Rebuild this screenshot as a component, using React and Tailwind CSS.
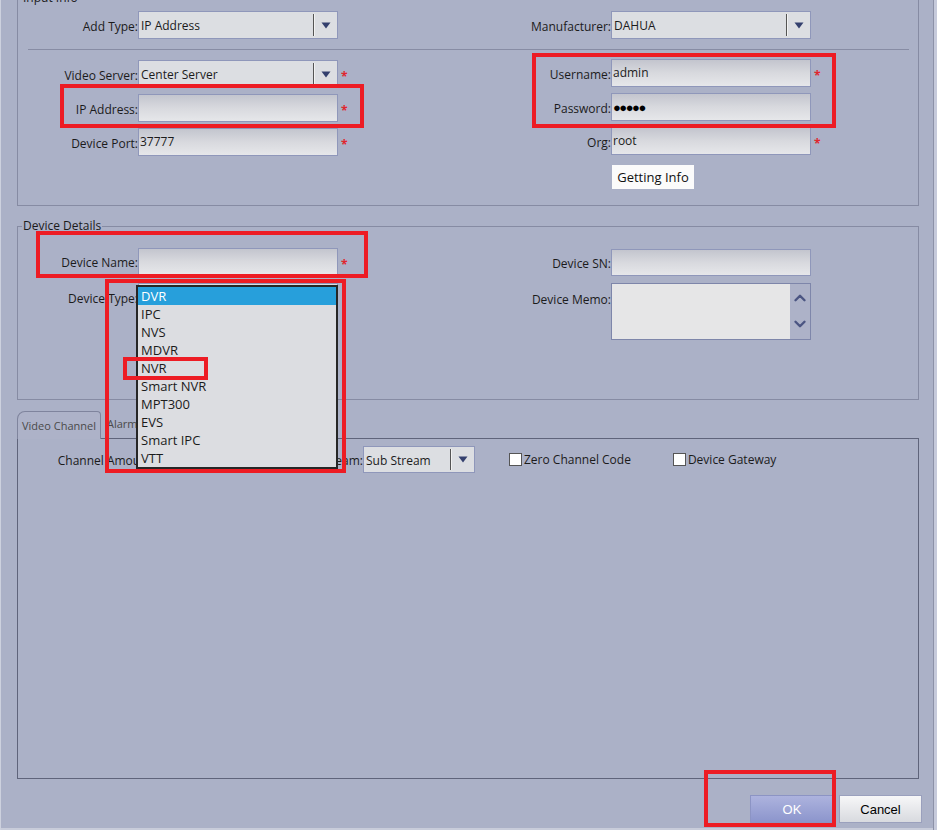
import React from 'react';
import { ChevronUp, ChevronDown } from 'lucide-react';

const font = { fontFamily: '"Open Sans", "Noto Sans", sans-serif' };
const narrow = { fontFamily: '"Liberation Sans Narrow", "Liberation Sans", sans-serif' };

const Tri = () => (
  <svg width="10" height="7" viewBox="0 0 10 7">
    <polygon points="0.5,0.5 9.5,0.5 5,6.5" fill="#34406e" />
  </svg>
);

const Req = () => <span className="pl-[3px] pt-[6px] text-[#e0262e] text-[12px] leading-none font-bold">*</span>;

const Input = ({ children, w = 'w-[200px]', h = 'h-[28px]' }) => (
  <div className={`${w} ${h} shrink-0 border border-[#8f97ba] bg-linear-to-b from-[#c3c5ce] via-[#d8d9de] to-[#e6e7ea] flex items-center pl-[1px] whitespace-nowrap`}>
    {children}
  </div>
);

const Select = ({ value, w = 'w-[200px]', h = 'h-[28px]' }) => (
  <div className={`${w} ${h} shrink-0 border border-[#8f97ba] bg-[#dcdee2] flex items-center`}>
    <span className="flex-1 pl-[2px] pt-[2px] whitespace-nowrap">{value}</span>
    <div className="w-[1px] self-stretch my-[2px] bg-[#555]" />
    <div className="w-[1px] self-stretch my-[2px] bg-[#f2f2f2]" />
    <div className="w-[22px] flex justify-center"><Tri /></div>
  </div>
);

const Label = ({ children, w = 'w-[120px]' }) => (
  <span className={`${w} shrink-0 pt-[3px] text-right whitespace-nowrap`}>{children}</span>
);

const Check = ({ label }) => (
  <div className="flex items-center gap-[2px]">
    <div className="w-[13px] h-[13px] bg-white border border-[#555]" />
    <span className="pt-[1px]">{label}</span>
  </div>
);

const Red = ({ cls }) => <div className={`absolute border-[4px] border-[#ed1c24] ${cls}`} />;

const items = ['DVR', 'IPC', 'NVS', 'MDVR', 'NVR', 'Smart NVR', 'MPT300', 'EVS', 'Smart IPC', 'VTT'];

export default function App() {
  return (
    <div className="relative w-[937px] h-[830px] overflow-hidden bg-[#abb1c7] flex text-[12px] text-[#1b1b1b]" style={font}>
      <div className="w-[1px] shrink-0 bg-[#cdd1de]" />

      <div className="flex-1 flex flex-col border-b-[2px] border-[#c8ccda]">
        {/* Input Info */}
        <div className="relative ml-[16px] w-[902px] -mt-[4px] border border-[#868ba3] pt-[14px] pb-[16px]">
          <span className="absolute -top-[7px] left-[4px] px-[1px] leading-[16px] bg-[#abb1c7]">Input Info</span>
          <div className="flex">
            <div className="w-[452px] flex items-center">
              <Label>Add Type:</Label>
              <Select value="IP Address" />
            </div>
            <div className="flex items-center">
              <Label w="w-[141px]">Manufacturer:</Label>
              <Select value="DAHUA" />
            </div>
          </div>
          <div className="h-[1px] bg-[#878ca4] ml-[10px] mr-[9px] mt-[10px]" />
          <div className="flex mt-[9px]">
            <div className="w-[452px] flex flex-col gap-[6px] pt-[1px]">
              <div className="flex items-center">
                <Label>Video Server:</Label>
                <Select value="Center Server" />
                <Req />
              </div>
              <div className="flex items-center">
                <Label>IP Address:</Label>
                <Input />
                <Req />
              </div>
              <div className="flex items-center">
                <Label>Device Port:</Label>
                <Input><span className="self-start pt-[4px]">37777</span></Input>
                <Req />
              </div>
            </div>
            <div className="flex flex-col gap-[6px]">
              <div className="flex items-center">
                <Label w="w-[141px]">Username:</Label>
                <Input><span className="self-start pt-[4px]">admin</span></Input>
                <Req />
              </div>
              <div className="flex items-center">
                <Label w="w-[141px]">Password:</Label>
                <Input><span className="text-[13px] tracking-[-1.5px] text-black pt-[1px]">●●●●●</span></Input>
              </div>
              <div className="flex items-center">
                <Label w="w-[141px]">Org:</Label>
                <Input><span className="self-start pt-[4px]">root</span></Input>
                <Req />
              </div>
              <div className="flex mt-[4px]">
                <div className="ml-[142px] w-[82px] h-[24px] bg-[#fbfbfb] flex items-center justify-center pt-[1px] text-[13px] text-[#111]">
                  Getting Info
                </div>
              </div>
            </div>
          </div>
        </div>

        {/* Device Details */}
        <div className="relative ml-[16px] w-[902px] mt-[20px] h-[174px] border border-[#868ba3] pt-[21px]">
          <span className="absolute -top-[9px] left-[4px] px-[1px] leading-[16px] bg-[#abb1c7]">Device Details</span>
          <div className="flex">
            <div className="w-[452px] flex flex-col gap-[8px]">
              <div className="flex items-center">
                <Label>Device Name:</Label>
                <Input h="h-[27px]" />
                <Req />
              </div>
              <div className="flex items-center">
                <Label>Device Type:</Label>
                <Select value="" />
              </div>
            </div>
            <div className="flex flex-col gap-[7px] pt-[1px]">
              <div className="flex items-center">
                <Label w="w-[141px]">Device SN:</Label>
                <Input h="h-[27px]" />
              </div>
              <div className="flex items-start">
                <Label w="w-[141px]"><span className="block pt-[5px]">Device Memo:</span></Label>
                <div className="w-[200px] h-[57px] border border-[#7e86aa] bg-[#e6e6e7] flex justify-end">
                  <div className="w-[20px] bg-[#adb2c8] flex flex-col items-center pt-[5px] gap-[8px]">
                    <ChevronUp size={18} strokeWidth={3.2} className="text-[#4b5582]" />
                    <ChevronDown size={18} strokeWidth={3.2} className="text-[#4b5582]" />
                  </div>
                </div>
              </div>
            </div>
          </div>
        </div>

        {/* Tabs */}
        <div className="ml-[16px] w-[902px] mt-[11px] flex items-end">
          <div className="relative z-10 w-[84px] h-[28px] -mb-[1px] border border-b-0 border-[#7f849d] rounded-tl-[8px] rounded-tr-[4px] bg-[#adb2c8] flex items-center justify-center pt-[1px] text-[11px] text-[#4a4a4a] whitespace-nowrap">
            Video Channel
          </div>
          <div className="h-[27px] flex items-center pl-[6px] w-[118px] text-[11px] text-[#4a4a4a] whitespace-nowrap">Alarm Input Channel</div>
          <div className="h-[27px] flex items-center pl-[4px] text-[11px] text-[#4a4a4a] whitespace-nowrap">Alarm Output Channe</div>
        </div>
        <div className="ml-[16px] w-[902px] h-[341px] border border-[#5f647b] pt-[7px]">
          <div className="flex items-center">
            <Label w="w-[137px]">Channel Amount:</Label>
            <Input w="w-[111px]" h="h-[27px]" />
            <Label w="w-[97px]">Stream:</Label>
            <Select value="Sub Stream" w="w-[112px]" h="h-[27px]" />
            <div className="ml-[34px]"><Check label="Zero Channel Code" /></div>
            <div className="ml-[42px]"><Check label="Device Gateway" /></div>
          </div>
        </div>

        {/* Buttons */}
        <div className="flex justify-end gap-[5px] mt-[16px] mr-[11px]">
          <div className="w-[84px] h-[28px] border border-[#8c94c4] bg-linear-to-b from-[#adb3de] to-[#8c95cc] flex items-center justify-center pt-[2px] text-[13px] text-white" style={narrow}>
            OK
          </div>
          <div className="w-[83px] h-[28px] border border-[#9aa0bd] bg-linear-to-b from-[#f7f7f8] to-[#d8dadf] flex items-center justify-center pt-[2px] text-[13px] text-black" style={narrow}>
            Cancel
          </div>
        </div>
      </div>

      <div className="w-[4px] shrink-0 border-l border-[#8d92a8] bg-[#c6cadb]" />

      {/* dropdown list of Device Type */}
      <div className="absolute left-[136px] top-[285px] w-[202px] border-2 border-[#262626] bg-[#dcdde1] flex flex-col">
        {items.map((it, i) => (
          <div key={it} className={i === 0 ? 'h-[18px] pl-[3px] pt-[1px] flex items-center bg-[#279fdb] text-white text-[13px]' : 'h-[18px] pl-[3px] pt-[1px] flex items-center text-[#1b1b1b] text-[13px]'}>
            {it}
          </div>
        ))}
      </div>

      {/* annotation boxes */}
      <Red cls="left-[60px] top-[84px] w-[304px] h-[44px]" />
      <Red cls="left-[532px] top-[53px] w-[304px] h-[75px]" />
      <Red cls="left-[36px] top-[231px] w-[332px] h-[47px]" />
      <Red cls="left-[105px] top-[279px] w-[241px] h-[194px]" />
      <Red cls="left-[123px] top-[357px] w-[85px] h-[23px]" />
      <Red cls="left-[704px] top-[770px] w-[132px] h-[57px]" />
    </div>
  );
}
